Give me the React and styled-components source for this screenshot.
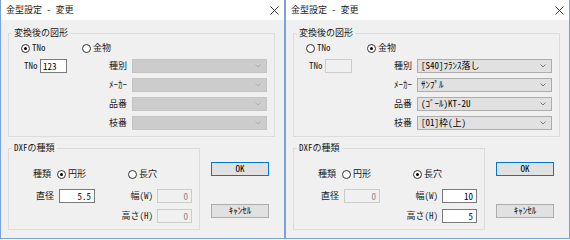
import React from 'react';
import styled, { createGlobalStyle } from 'styled-components';

const Global = createGlobalStyle`
  html, body { margin: 0; padding: 0; background: #fff; }
  body {
    font-family: "Noto Sans CJK JP", "Noto Sans", sans-serif;
    font-size: 9px;
    color: #1a1a1a;
    font-feature-settings: "hwid" 1;
  }
  input, button { font-feature-settings: "hwid" 1; }
`;

const Screen = styled.div`
  display: flex;
  width: 570px;
  height: 240px;
`;

const Window = styled.div`
  width: 285px;
  height: 239px;
  box-sizing: border-box;
  border: 1px solid #7ba1d7;
  border-top: none;
  display: flex;
  flex-direction: column;
  background: #f0f0f0;
`;

const TitleBar = styled.div`
  height: 20px;
  flex-shrink: 0;
  background: #fff;
  display: flex;
  align-items: center;
  justify-content: space-between;
  padding: 0 5px 0 5px;
`;

const Title = styled.span`
  font-size: 9px;
  line-height: 12px;
`;

const Body = styled.div`
  flex: 1;
  padding: 13px 9px 0 7px;
  display: flex;
  flex-direction: column;
`;

const Group = styled.div`
  border: 1px solid #dcdcdc;
  display: flex;
  flex-direction: column;
  width: ${p => p.$w}px;
  box-sizing: border-box;
  padding-bottom: 6px;
`;

const Legend = styled.div`
  align-self: flex-start;
  margin: -7px 0 0 3px;
  padding: 0 2px;
  height: 12px;
  line-height: 12px;
  background: #f0f0f0;
`;

const RadioRow = styled.div`
  display: flex;
  align-items: center;
  height: 12px;
  margin-top: ${p => p.$mt || 0}px;
  padding-left: ${p => p.$pl || 0}px;
`;

const RadioItem = styled.div`
  display: flex;
  align-items: center;
  gap: 2px;
  width: ${p => (p.$w ? `${p.$w}px` : 'auto')};
  height: 12px;
  line-height: 12px;
  white-space: nowrap;
`;

const Circle = styled.span`
  width: 9px;
  height: 9px;
  box-sizing: border-box;
  border: 1px solid #333;
  border-radius: 50%;
  background: #fff;
  display: flex;
  align-items: center;
  justify-content: center;
  flex-shrink: 0;
  &::after {
    content: "";
    width: 3px;
    height: 3px;
    border-radius: 50%;
    background: ${p => (p.$on ? '#000' : 'transparent')};
  }
`;

const SelectArea = styled.div`
  display: flex;
  margin-top: 5px;
`;

const TnoPart = styled.div`
  display: flex;
  align-items: flex-start;
  padding-left: 15px;
`;

const LabelCell = styled.div`
  width: ${p => p.$w}px;
  flex-shrink: 0;
  text-align: ${p => p.$align || 'right'};
  white-space: nowrap;
  line-height: 14px;
  height: 14px;
`;

const ComboGrid = styled.div`
  margin-left: auto;
  margin-right: 7px;
  display: grid;
  grid-template-columns: auto 135px;
  column-gap: 5px;
  row-gap: 5px;
  align-items: center;
`;

const ComboLabel = styled.div`
  justify-self: end;
  white-space: nowrap;
  line-height: 14px;
`;

const Combo = styled.div`
  height: 14px;
  box-sizing: border-box;
  border: 1px solid ${p => (p.$disabled ? '#c4c4c4' : '#adadad')};
  background: ${p => (p.$disabled ? '#cccccc' : '#e1e1e1')};
  display: flex;
  align-items: center;
  justify-content: space-between;
  padding: 0 5px 0 3px;
  line-height: 12px;
  white-space: nowrap;
  color: #000;
`;

const Field = styled.input`
  width: ${p => p.$w}px;
  height: 14px;
  box-sizing: border-box;
  margin: 0;
  padding: 0 ${p => (p.$left ? '0 0 2px' : '3px 0 0')};
  border: 1px solid #7a7a7a;
  background: #fff;
  font-family: inherit;
  font-size: 9px;
  line-height: 12px;
  color: #000;
  text-align: ${p => (p.$left ? 'left' : 'right')};
  outline: none;
  flex-shrink: 0;
  &:disabled {
    border-color: #cccccc;
    background: #f0f0f0;
    color: #8a8a8a;
    -webkit-text-fill-color: #8a8a8a;
  }
`;

const Lower = styled.div`
  display: flex;
  margin-top: 11px;
`;

const DxfRow = styled.div`
  display: flex;
  align-items: center;
  height: ${p => p.$h || 14}px;
  margin-top: ${p => p.$mt || 0}px;
`;

const Gap = styled.span`
  width: ${p => p.$w}px;
  flex-shrink: 0;
`;

const ButtonCol = styled.div`
  display: flex;
  flex-direction: column;
  margin-left: 11px;
  padding-top: 14px;
  gap: 28px;
`;

const Button = styled.button`
  width: 58px;
  height: 14px;
  box-sizing: border-box;
  margin: 0;
  padding: 0;
  border: 1px solid ${p => (p.$default ? '#0078d7' : '#adadad')};
  background: #e1e1e1;
  font-family: inherit;
  font-size: 9px;
  line-height: 12px;
  color: #000;
`;

const Chevron = ({ disabled }) => (
  <svg width="6" height="4" viewBox="0 0 6 4">
    <path d="M0.5 0.5 L3 3 L5.5 0.5" fill="none" stroke={disabled ? '#a8a8a8' : '#606060'} strokeWidth="0.8" />
  </svg>
);

const CloseIcon = () => (
  <svg width="9" height="9" viewBox="0 0 9 9">
    <path d="M0.5 0.5 L8.5 8.5 M8.5 0.5 L0.5 8.5" stroke="#222" strokeWidth="0.9" fill="none" />
  </svg>
);

const Radio = ({ on, label, w }) => (
  <RadioItem $w={w}>
    <Circle $on={on} />
    <span>{label}</span>
  </RadioItem>
);

const comboLabels = ['種別', 'ﾒｰｶｰ', '品番', '枝番'];

const Dialog = ({ d }) => (
  <Window>
    <TitleBar>
      <Title>金型設定 - 変更</Title>
      <CloseIcon />
    </TitleBar>
    <Body>
      <Group $w={267}>
        <Legend>変換後の図形</Legend>
        <RadioRow $mt={3} $pl={12}>
          <Radio on={d.tno} label="TNo" w={61} />
          <Radio on={!d.tno} label="金物" />
        </RadioRow>
        <SelectArea>
          <TnoPart>
            <LabelCell $w={16} $align="left">TNo</LabelCell>
            <Field $w={27} $left disabled={!d.tno} readOnly value={d.tnoValue} />
          </TnoPart>
          <ComboGrid>
            {comboLabels.map((l, i) => (
              <React.Fragment key={l}>
                <ComboLabel>{l}</ComboLabel>
                <Combo $disabled={d.tno}>
                  <span>{d.combos[i]}</span>
                  <Chevron disabled={d.tno} />
                </Combo>
              </React.Fragment>
            ))}
          </ComboGrid>
        </SelectArea>
      </Group>
      <Lower>
        <Group $w={192}>
          <Legend>DXFの種類</Legend>
          <DxfRow $mt={14} $h={12}>
            <LabelCell $w={42}>種類</LabelCell>
            <Gap $w={6} />
            <Radio on={d.circle} label="円形" w={71} />
            <Radio on={!d.circle} label="長穴" />
          </DxfRow>
          <DxfRow $mt={9}>
            <LabelCell $w={45}>直径</LabelCell>
            <Gap $w={5} />
            <Field $w={36} disabled={!d.circle} readOnly value={d.dia} />
            <LabelCell $w={58}>幅(W)</LabelCell>
            <Gap $w={4} />
            <Field $w={35} disabled={d.circle} readOnly value={d.width} />
          </DxfRow>
          <DxfRow $mt={6}>
            <LabelCell $w={144}>高さ(H)</LabelCell>
            <Gap $w={4} />
            <Field $w={35} disabled={d.circle} readOnly value={d.height} />
          </DxfRow>
        </Group>
        <ButtonCol>
          <Button $default>OK</Button>
          <Button>ｷｬﾝｾﾙ</Button>
        </ButtonCol>
      </Lower>
    </Body>
  </Window>
);

const dialogs = [
  {
    tno: true,
    tnoValue: '123',
    combos: ['', '', '', ''],
    circle: true,
    dia: '5.5',
    width: '0',
    height: '0',
  },
  {
    tno: false,
    tnoValue: '',
    combos: ['[S40]ﾌﾗﾝｽ落し', 'ｻﾝﾌﾟﾙ', '(ｺﾞｰﾙ)KT-2U', '[01]枠(上)'],
    circle: false,
    dia: '0',
    width: '10',
    height: '5',
  },
];

export default function App() {
  return (
    <>
      <Global />
      <Screen>
        {dialogs.map((d, i) => (
          <Dialog key={i} d={d} />
        ))}
      </Screen>
    </>
  );
}
